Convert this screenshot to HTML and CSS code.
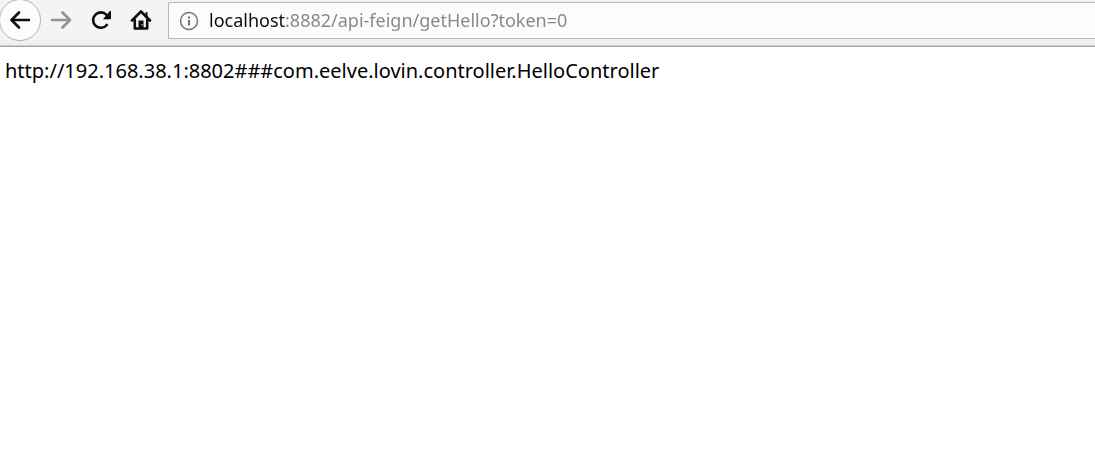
FILE: index.html
```html
<!DOCTYPE html>
<html lang="en">
<head>
<meta charset="utf-8">
<title>getHello</title>
<link rel="stylesheet" href="styles.css">
</head>
<body>
<header class="toolbar">
  <nav class="nav" aria-label="Browser navigation">
    <button class="nav-button nav-back" type="button" aria-label="Back">
      <svg class="icon" viewBox="0 0 24 24"><path d="M21 12H4M11 4.500L3.500 12l7.500 7.500"/></svg>
    </button>
    <button class="nav-button nav-forward" type="button" aria-label="Forward">
      <svg class="icon" viewBox="0 0 24 24"><path d="M3 12h18M13.500 4.500l7.500 7.500-7.500 7.500"/></svg>
    </button>
    <button class="nav-button" type="button" aria-label="Reload">
      <svg class="icon" viewBox="0 0 24 24"><path d="M17.800 17a7.700 7.700 0 1 1-.2-10"/><path class="solid" d="M20.800 3q1.200-.5 1.200.8v6.600q0 .8-.8.8h-7.200z"/></svg>
    </button>
    <button class="nav-button" type="button" aria-label="Home">
      <svg class="icon" viewBox="0 0 24 24"><path d="M3 12.500L12 3.500l9 9M5.800 12v8.500h12.400V12"/><path class="thin" d="M17.500 5v4"/><path class="solid" d="M9.500 12.500h5v8h-5z"/><path class="knob" d="M12.500 16h1v1.300h-1z"/></svg>
    </button>
  </nav>
  <form class="address">
    <svg class="info" viewBox="0 0 20 20" aria-hidden="true"><circle cx="10" cy="10" r="8.500"/><path d="M10 9v5.500M10 5.500v2"/></svg>
    <input class="url" type="text" aria-label="Address" value="localhost:8882/api-feign/getHello?token=0" spellcheck="false">
  </form>
</header>
<main class="content">http://192.168.38.1:8802###com.eelve.lovin.controller.HelloController</main>
</body>
</html>
```
FILE: styles.css
```css
* {
  box-sizing: border-box;
}

body {
  margin: 0;
  background: #fff;
  color: #000;
  font-family: "Noto Sans", "Open Sans", sans-serif;
}

.toolbar {
  display: flex;
  align-items: flex-start;
  height: 47px;
  overflow: hidden;
  background: linear-gradient(#f4f4f4 80%, #ececec);
  border-bottom: 1px solid #a3a3a3;
  box-shadow: inset 0 -1px #cfcfcf;
}

.nav {
  display: flex;
  flex: none;
  align-items: center;
  margin: -1px 7px 0 -1px;
}

.nav-button {
  display: flex;
  align-items: center;
  justify-content: center;
  width: 40px;
  height: 42px;
  padding: 0;
  border: 0;
  background: none;
  color: #0c0c0c;
}

.nav-back {
  width: 42px;
  border: 1px solid #b1b1b1;
  border-radius: 50%;
  background: #fcfcfc;
}

.nav-forward {
  color: #939393;
}

.icon {
  width: 24px;
  height: 24px;
  fill: none;
  stroke: currentColor;
  stroke-width: 2.6;
  stroke-linecap: round;
  stroke-linejoin: round;
}

.icon .solid {
  fill: currentColor;
  stroke: none;
}

.icon .thin {
  stroke-width: 2;
}

.icon .knob {
  fill: #f4f4f4;
  stroke: none;
}

.address {
  display: flex;
  flex: 1;
  align-items: center;
  gap: 10px;
  height: 37px;
  margin-top: 2px;
  padding-left: 10px;
  border: 1px solid #b8b8b8;
  border-right: 0;
  border-radius: 2px 0 0 2px;
  background: #fcfcfc;
}

.info {
  flex: none;
  width: 20px;
  height: 20px;
  fill: none;
  stroke: #737373;
  stroke-width: 2;
}

.info circle {
  stroke-width: 1.5;
}

/* The host is darker than the rest of the address. */
.url {
  flex: 1;
  min-width: 0;
  padding: 0 0 2px;
  border: 0;
  outline: 0;
  background: linear-gradient(90deg, #0c0c0c 77px, #858585 77px);
  -webkit-background-clip: text;
  background-clip: text;
  color: transparent;
  font: 18px/26px "Noto Sans", "Open Sans", sans-serif;
}

.content {
  padding: 10px 5px;
  font-size: 20px;
  line-height: 28px;
  overflow-wrap: anywhere;
}
```
